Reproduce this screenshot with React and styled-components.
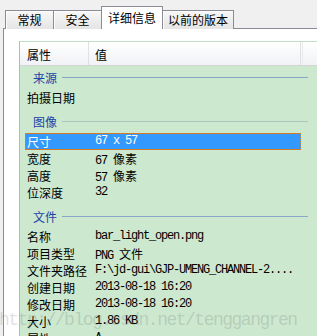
import React from 'react';
import styled, { createGlobalStyle } from 'styled-components';

const cjk = `"Noto Sans CJK SC", "Noto Sans", sans-serif`;
const mono = `"Liberation Mono", "Noto Sans CJK SC", monospace`;

const Global = createGlobalStyle`
  html, body { margin: 0; padding: 0; background: #f0f0f0; }
  body { width: 317px; height: 336px; overflow: hidden; }
`;

const Window = styled.div`
  position: relative;
  width: 317px;
  height: 336px;
  overflow: hidden;
  display: flex;
  flex-direction: column;
  background: #f0f0f0;
  font-family: ${cjk};
  font-size: 12px;
  color: #000;
`;

const TabBar = styled.div`
  flex: none;
  display: flex;
  align-items: flex-end;
  height: 29px;
  padding-left: 5px;
  margin-bottom: -1px;
`;

const Tab = styled.div`
  box-sizing: border-box;
  height: ${p => (p.$active ? 23 : 19)}px;
  min-width: 49px;
  padding: 0 ${p => (p.$active ? 6 : 5)}px;
  margin-left: ${p => (p.$first ? 0 : -1)}px;
  border: 1px solid #898c95;
  border-bottom: none;
  background: ${p => (p.$active ? '#ffffff' : 'linear-gradient(#f7f7f7, #e5e5e5)')};
  box-shadow: ${p => (p.$active ? 'none' : 'inset 1px 1px 0 #fcfcfc')};
  display: flex;
  align-items: center;
  justify-content: center;
  line-height: 1;
  white-space: nowrap;
  position: ${p => (p.$active ? 'relative' : 'static')};
  z-index: 2;
`;

const Panel = styled.div`
  position: relative;
  z-index: 1;
  flex: 1;
  min-height: 0;
  margin-left: 3px;
  border-top: 1px solid #898c95;
  border-left: 1px solid #898c95;
  background: #ffffff;
  padding: 12px 0 0 15px;
  display: flex;
  flex-direction: column;
`;

const List = styled.div`
  flex: 1;
  width: 320px;
  border-top: 1px solid #bfe0c6;
  border-left: 1px solid #a9bfae;
  background: #cce8cf;
  display: flex;
  flex-direction: column;
`;

const HeaderRow = styled.div`
  flex: none;
  display: flex;
  height: 23px;
  background: linear-gradient(#ffffff, #f1f2f5);
  border-bottom: 1px solid #d5d5d5;
`;

const HeaderCell = styled.div`
  box-sizing: border-box;
  flex: ${p => (p.$w ? 'none' : '1')};
  width: ${p => (p.$w ? `${p.$w}px` : 'auto')};
  padding: 2px 0 0 ${p => p.$pad}px;
  line-height: 21px;
  border-right: ${p => (p.$w ? '1px solid #dfe0e3' : 'none')};
  border-left: ${p => (p.$w ? 'none' : '1px solid #ebebeb')};
  margin-left: ${p => (p.$w ? 0 : 1)}px;
`;

const Body = styled.div`
  flex: 1;
`;

const GroupHead = styled.div`
  box-sizing: border-box;
  display: flex;
  align-items: center;
  width: 288px;
  height: 23px;
  margin-top: ${p => (p.$first ? 0 : 4)}px;
  padding-left: 13px;
  color: #1d43a8;
  white-space: nowrap;
  &::after {
    content: '';
    flex: 1;
    height: 1px;
    margin-left: 5px;
    background: ${p => p.$line};
  }
`;

const Row = styled.div`
  display: flex;
  height: 17px;
  line-height: 17px;
  margin-left: 5px;
  width: 276px;
  overflow: hidden;
  background: ${p => (p.$selected ? '#3399ff' : 'transparent')};
  color: ${p => (p.$selected ? '#ffffff' : '#000000')};
  outline: ${p => (p.$selected ? '1px dotted #d9822b' : 'none')};
  outline-offset: -1px;
`;

const Label = styled.div`
  box-sizing: border-box;
  flex: none;
  width: 70px;
  padding-left: 2px;
  white-space: nowrap;
`;

const Value = styled.div`
  font-family: ${mono};
  font-size: 12px;
  letter-spacing: -1.2px;
  white-space: nowrap;
`;

const Han = styled.span`
  font-family: ${cjk};
  font-size: 12px;
  letter-spacing: 0;
  line-height: 17px;
`;

const Watermark = styled.div`
  position: absolute;
  left: -1px;
  top: 310px;
  z-index: 5;
  font-family: "Liberation Mono", monospace;
  font-size: 18px;
  line-height: 20px;
  letter-spacing: -1.5px;
  color: rgba(90, 90, 90, 0.2);
  white-space: nowrap;
  pointer-events: none;
`;

const renderValue = v =>
  v.split(/([\u4e00-\u9fff]+)/).map((part, i) =>
    /[\u4e00-\u9fff]/.test(part) ? <Han key={i}>{part}</Han> : part
  );

const groups = [
  { title: '来源', line: '#87a6c4', rows: [['拍摄日期', '']] },
  {
    title: '图像',
    line: '#aac6be',
    rows: [
      ['尺寸', '67 x 57', true],
      ['宽度', '67 像素'],
      ['高度', '57 像素'],
      ['位深度', '32'],
    ],
  },
  {
    title: '文件',
    line: '#8aa8c6',
    rows: [
      ['名称', 'bar_light_open.png'],
      ['项目类型', 'PNG 文件'],
      ['文件夹路径', 'F:\\jd-gui\\GJP-UMENG_CHANNEL-2....'],
      ['创建日期', '2013-08-18 16:20'],
      ['修改日期', '2013-08-18 16:20'],
      ['大小', '1.86 KB'],
      ['属性', 'A'],
    ],
  },
];

export default function App() {
  return (
    <Window>
      <Global />
      <TabBar>
        <Tab $first>常规</Tab>
        <Tab>安全</Tab>
        <Tab $active>详细信息</Tab>
        <Tab>以前的版本</Tab>
      </TabBar>
      <Panel>
        <List>
          <HeaderRow>
            <HeaderCell $w={69} $pad={7}>属性</HeaderCell>
            <HeaderCell $w={212} $pad={6}>值</HeaderCell>
            <HeaderCell $pad={0} />
          </HeaderRow>
          <Body>
            {groups.map((g, gi) => (
              <React.Fragment key={g.title}>
                <GroupHead $first={gi === 0} $line={g.line}>{g.title}</GroupHead>
                {g.rows.map(([label, value, sel]) => (
                  <Row key={label} $selected={sel}>
                    <Label>{label}</Label>
                    <Value>{renderValue(value)}</Value>
                  </Row>
                ))}
              </React.Fragment>
            ))}
          </Body>
        </List>
      </Panel>
      <Watermark>http://blog.csdn.net/tenggangren</Watermark>
    </Window>
  );
}
